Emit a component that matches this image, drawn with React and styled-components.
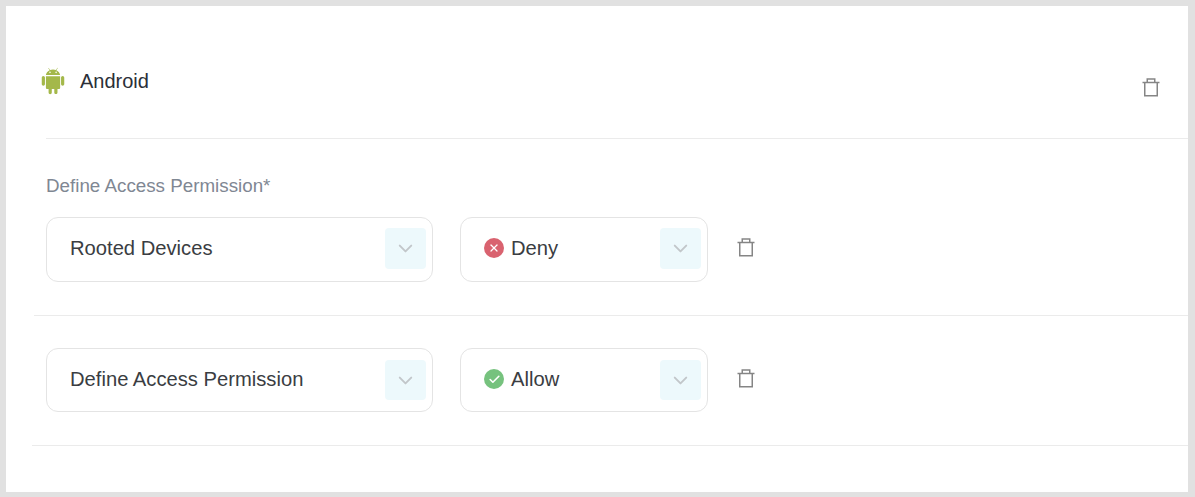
import React from "react";
import styled, { createGlobalStyle } from "styled-components";
import { ChevronDown, X, Check } from "lucide-react";
import { AiFillAndroid } from "react-icons/ai";

const GlobalStyle = createGlobalStyle`
  html, body {
    margin: 0;
    padding: 0;
    background: #e1e1e1;
    font-family: "Liberation Sans", Arial, sans-serif;
  }
`;

const rules = [
  { id: 1, name: "Rooted Devices", access: "Deny" },
  { id: 2, name: "Define Access Permission", access: "Allow" },
];

const TrashIcon = () => (
  <svg width="18" height="19" viewBox="0 0 18 19" fill="none" stroke="currentColor" strokeWidth="1.5">
    <path d="M0.5 4.5h17" />
    <path d="M2.75 4.5V17.75h12.5V4.5" />
    <path d="M5.25 4.5V1h7.5v3.5" />
  </svg>
);

const App = () => {
  return (
    <>
      <GlobalStyle />
      <Card>
        <Header>
          <Platform>
            <AiFillAndroid size={30} color="#a4b84a" />
            <PlatformName>Android</PlatformName>
          </Platform>
          <HeaderTrash>
            <TrashIcon />
          </HeaderTrash>
        </Header>
        <Divider $left={40} />
        <Label>Define Access Permission*</Label>
        <FirstRow>
          <Rule rule={rules[0]} />
        </FirstRow>
        <Divider $left={28} />
        <SecondRow>
          <Rule rule={rules[1]} compact />
        </SecondRow>
        <Divider $left={26} />
      </Card>
    </>
  );
};

const Rule = ({ rule, compact }) => {
  const isAllow = rule.access === "Allow";
  return (
    <>
      <NameSelect $compact={compact}>
        <SelectText $compact={compact}>{rule.name}</SelectText>
        <ChevronBox $compact={compact}>
          <ChevronDown size={23} strokeWidth={2} />
        </ChevronBox>
      </NameSelect>
      <AccessSelect $compact={compact}>
        <AccessValue>
          <StatusDot $allow={isAllow}>
            {isAllow ? <Check size={13} strokeWidth={3} /> : <X size={12} strokeWidth={2.5} />}
          </StatusDot>
          <SelectText $compact={compact}>{rule.access}</SelectText>
        </AccessValue>
        <ChevronBox $compact={compact}>
          <ChevronDown size={23} strokeWidth={2} />
        </ChevronBox>
      </AccessSelect>
      <RowTrash>
        <TrashIcon />
      </RowTrash>
    </>
  );
};

const Card = styled.div`
  box-sizing: border-box;
  width: 1182px;
  height: 486px;
  margin: 6px 0 0 6px;
  background: #fff;
  overflow: hidden;
`;

const Header = styled.div`
  display: flex;
  align-items: center;
  justify-content: space-between;
  height: 132px;
  padding: 18px 28px 0 32px;
  box-sizing: border-box;
`;

const Platform = styled.div`
  display: flex;
  align-items: center;
  gap: 12px;
`;

const PlatformName = styled.span`
  font-size: 20px;
  color: #2b2f38;
`;

const Divider = styled.div`
  height: 1px;
  margin-left: ${(p) => p.$left}px;
  background: #ebebeb;
`;

const Label = styled.div`
  margin: 36px 0 0 40px;
  font-size: 18.8px;
  line-height: 22px;
  color: #7f8793;
`;

const Row = styled.div`
  display: flex;
  align-items: center;
  padding-left: 40px;
`;

const FirstRow = styled(Row)`
  margin-top: 20px;
  margin-bottom: 33px;
`;

const SecondRow = styled(Row)`
  margin-top: 32px;
  margin-bottom: 33px;
`;

const Select = styled.div`
  box-sizing: border-box;
  display: flex;
  align-items: center;
  justify-content: space-between;
  height: ${(p) => (p.$compact ? 64 : 65)}px;
  padding: 0 6px ${(p) => (p.$compact ? 0 : 2)}px 23px;
  background: #fff;
  border: 1px solid #e4e4e4;
  border-radius: 12px;
`;

const NameSelect = styled(Select)`
  width: 387px;
  margin-right: 27px;
`;

const AccessSelect = styled(Select)`
  width: 248px;
  margin-right: 29px;
`;

const SelectText = styled.span`
  font-size: 20.2px;
  color: #3a3d42;
  margin-bottom: ${(p) => (p.$compact ? 2 : 0)}px;
`;

const AccessValue = styled.div`
  display: flex;
  align-items: center;
  gap: 7px;
`;

const StatusDot = styled.span`
  display: flex;
  align-items: center;
  justify-content: center;
  width: 20px;
  height: 20px;
  margin-bottom: 2px;
  border-radius: 50%;
  color: #fff;
  background: ${(p) => (p.$allow ? "#76c27e" : "#d9626f")};
`;

const ChevronBox = styled.div`
  display: flex;
  align-items: center;
  justify-content: center;
  width: 41px;
  height: ${(p) => (p.$compact ? 40 : 41)}px;
  border-radius: 4px;
  background: #edf9fc;
  color: #c2c7ca;
`;

const TrashWrap = styled.div`
  display: flex;
  align-items: center;
  color: #858585;
`;

const HeaderTrash = styled(TrashWrap)`
  margin-top: 12px;
`;

const RowTrash = styled(TrashWrap)`
  margin-bottom: 4px;
`;

export default App;
